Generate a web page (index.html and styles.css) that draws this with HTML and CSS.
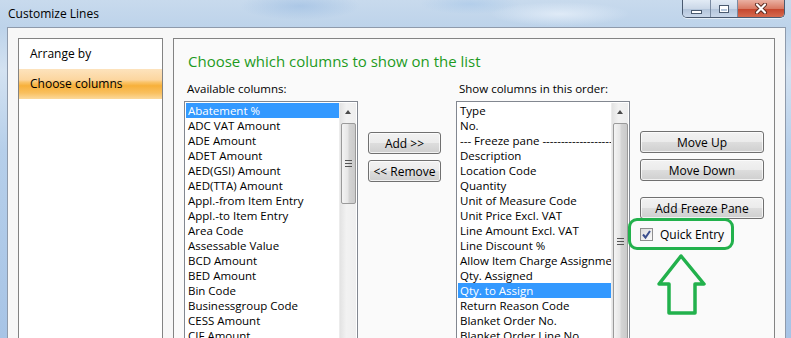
FILE: index.html
```html
<!DOCTYPE html>
<html lang="en">
<head>
  <meta charset="UTF-8">
  <title>Customize Lines</title>
  <link rel="stylesheet" href="styles.css">
</head>
<body>
  <div class="window">
    <div class="titlebar">
      <span class="title">Customize Lines</span>
      <div class="caption-buttons">
        <span class="cap-btn cap-min"><span class="min-glyph"></span></span>
        <span class="cap-btn cap-max"><span class="max-glyph"></span></span>
        <span class="cap-btn cap-close">
          <svg width="14" height="11" viewBox="0 0 14 11">
            <path d="M3 1.5 L11 9.5 M11 1.5 L3 9.5" stroke="#5a2a20" stroke-width="4" stroke-linecap="round"/>
            <path d="M3 1.5 L11 9.5 M11 1.5 L3 9.5" stroke="#fff" stroke-width="2.2" stroke-linecap="round"/>
          </svg>
        </span>
      </div>
    </div>

    <div class="client">
      <ul class="nav">
        <li class="nav-item">Arrange by</li>
        <li class="nav-item active">Choose columns</li>
      </ul>

      <div class="content">
        <h2 class="heading">Choose which columns to show on the list</h2>
        <div class="columns">
          <div class="list-col">
            <div class="list-label">Available columns:</div>
            <div class="listbox">
              <ul class="items">
                <li class="selected">Abatement %</li>
                <li>ADC VAT Amount</li>
                <li>ADE Amount</li>
                <li>ADET Amount</li>
                <li>AED(GSI) Amount</li>
                <li>AED(TTA) Amount</li>
                <li>Appl.-from Item Entry</li>
                <li>Appl.-to Item Entry</li>
                <li>Area Code</li>
                <li>Assessable Value</li>
                <li>BCD Amount</li>
                <li>BED Amount</li>
                <li>Bin Code</li>
                <li>Businessgroup Code</li>
                <li>CESS Amount</li>
                <li>CIF Amount</li>
              </ul>
              <div class="scrollbar">
                <div class="scroll-up"></div>
                <div class="thumb thumb-short"><span class="grip"></span></div>
              </div>
            </div>
          </div>

          <div class="mid-buttons">
            <button class="btn">Add &gt;&gt;</button>
            <button class="btn">&lt;&lt; Remove</button>
          </div>

          <div class="list-col second">
            <div class="list-label">Show columns in this order:</div>
            <div class="listbox">
              <ul class="items">
                <li>Type</li>
                <li>No.</li>
                <li>--- Freeze pane ------------------------------------</li>
                <li>Description</li>
                <li>Location Code</li>
                <li>Quantity</li>
                <li>Unit of Measure Code</li>
                <li>Unit Price Excl. VAT</li>
                <li>Line Amount Excl. VAT</li>
                <li>Line Discount %</li>
                <li>Allow Item Charge Assignment</li>
                <li>Qty. Assigned</li>
                <li class="selected">Qty. to Assign</li>
                <li>Return Reason Code</li>
                <li>Blanket Order No.</li>
                <li>Blanket Order Line No.</li>
              </ul>
              <div class="scrollbar">
                <div class="scroll-up"></div>
                <div class="thumb thumb-long"><span class="grip"></span></div>
              </div>
            </div>
          </div>

          <div class="side-buttons">
            <button class="btn">Move Up</button>
            <button class="btn">Move Down</button>
            <button class="btn freeze">Add Freeze Pane</button>
            <div class="check-row">
              <span class="checkbox">
                <svg width="11" height="11" viewBox="0 0 11 11">
                  <path d="M2 5.5 L4.5 8.5 L9 2" fill="none" stroke="#3b4f8e" stroke-width="2"/>
                </svg>
              </span>
              <span>Quick Entry</span>
              <span class="highlight-ring"></span>
              <svg class="up-arrow" width="54" height="66" viewBox="0 0 54 66">
                <polygon points="26,4 49,32 40,32 40,61 14,61 14,32 4,32" fill="none" stroke="#22b14c" stroke-width="3.5" stroke-linejoin="round"/>
              </svg>
            </div>
          </div>
        </div>
      </div>
    </div>
  </div>
</body>
</html>
```

FILE: styles.css
```css
* {
  box-sizing: border-box;
}
body {
  margin: 0;
  width: 791px;
  height: 338px;
  overflow: hidden;
  font-family: "Open Sans", "Noto Sans", sans-serif;
  font-size: 11.5px;
  color: #000;
  background: linear-gradient(180deg, #c8daed 0, #bdd3ea 27px, #d3e2f1 70px, #b6cfea 150px, #a7c4e6 338px);
}
.window {
  height: 338px;
  display: flex;
  flex-direction: column;
}
.titlebar {
  height: 27px;
  display: flex;
  align-items: flex-start;
  padding-left: 8px;
  background:
    radial-gradient(ellipse 60px 14px at 300px 6px, rgba(150, 185, 225, 0.55), transparent),
    radial-gradient(ellipse 70px 12px at 560px 14px, rgba(235, 243, 252, 0.7), transparent),
    radial-gradient(ellipse 50px 10px at 470px 4px, rgba(160, 195, 232, 0.5), transparent);
}
.title {
  line-height: 27px;
  font-size: 12px;
}
.caption-buttons {
  margin-left: auto;
  margin-right: 6px;
  height: 18px;
  display: flex;
  border: 1px solid #4a5a70;
  border-top: none;
  border-radius: 0 0 5px 5px;
  overflow: hidden;
  box-shadow: 0 1px 0 rgba(255, 255, 255, 0.6);
}
.cap-btn {
  display: flex;
  align-items: center;
  justify-content: center;
  height: 17px;
}
.cap-min,
.cap-max {
  width: 28px;
  background: linear-gradient(#e2ebf5, #cbd8e8 50%, #b1c3d9 51%, #cad8ea);
  border-right: 1px solid #7a8ba2;
}
.cap-max {
  width: 27px;
}
.cap-close {
  width: 46px;
  background: linear-gradient(#eab0a2, #d97a64 50%, #c4442c 51%, #d66a4e);
}
.min-glyph {
  width: 11px;
  height: 4px;
  margin-top: 7px;
  background: #fff;
  border: 1px solid #4b5b70;
}
.max-glyph {
  width: 10px;
  height: 8px;
  border: 1px solid #4b5b70;
  box-shadow: inset 0 0 0 1px #fff, inset 0 2px 0 1px #fff;
  background: transparent;
}
.client {
  flex: 1;
  margin: 0 5px 0 7px;
  border: 1px solid #8e9aab;
  border-bottom: none;
  background: #f7f7f7;
  display: flex;
  gap: 10px;
  padding: 10px 10px 0 10px;
}
.nav {
  width: 145px;
  margin: 0;
  padding: 0;
  list-style: none;
  background: #fff;
  border: 1px solid #838383;
  border-bottom: none;
}
.nav-item {
  height: 30px;
  line-height: 30px;
  padding-left: 11px;
  font-size: 12px;
}
.nav-item.active {
  background: linear-gradient(#fde3bd 0%, #fcd69f 36%, #fac46a 44%, #f7b03a 56%, #f9c060 80%, #fcd99c 100%);
}
.content {
  flex: 1;
  background: #fafafa;
  border: 1px solid #838383;
  border-bottom: none;
  padding: 11px 10px 0 10px;
}
.heading {
  margin: 0 0 9px 4px;
  font-size: 15px;
  line-height: 22px;
  font-weight: normal;
  color: #1e9a1e;
}
.columns {
  display: flex;
  align-items: flex-start;
}
.list-col {
  width: 174px;
}
.list-col.second {
  margin-left: 15px;
}
.list-label {
  line-height: 15px;
  padding-left: 3px;
  margin-bottom: 5px;
}
.listbox {
  height: 260px;
  display: flex;
  background: #fff;
  border: 1px solid #828790;
  border-bottom: none;
  padding: 1px 1px 0 1px;
}
.items {
  flex: 1;
  min-width: 0;
  margin: 0;
  padding: 0;
  list-style: none;
  overflow: hidden;
}
.items li {
  height: 15px;
  line-height: 15px;
  padding-left: 2px;
  white-space: nowrap;
  overflow: hidden;
}
.items li.selected {
  background: #3399ff;
  color: #fff;
}
.scrollbar {
  width: 17px;
  background: linear-gradient(90deg, #e3e3e3, #f2f2f2 40%, #eeeeee);
  border-left: 1px solid #ececec;
  display: flex;
  flex-direction: column;
  align-items: center;
}
.scroll-up {
  width: 17px;
  height: 17px;
  position: relative;
}
.scroll-up::after {
  content: "";
  position: absolute;
  left: 5px;
  top: 7px;
  border-left: 3.5px solid transparent;
  border-right: 3.5px solid transparent;
  border-bottom: 4px solid #4a4a4a;
}
.thumb {
  width: 15px;
  margin-top: 3px;
  border: 1px solid #9a9a9a;
  border-radius: 2px;
  background: linear-gradient(90deg, #f4f4f4, #e6e6e6 45%, #d4d4d4 55%, #cacaca);
  display: flex;
  align-items: center;
  justify-content: center;
}
.thumb-short {
  height: 81px;
}
.thumb-long {
  height: 236px;
}
.grip {
  width: 7px;
  height: 7px;
  background: linear-gradient(#555 0 1px, transparent 1px 3px, #555 3px 4px, transparent 4px 6px, #555 6px 7px);
}
.mid-buttons,
.side-buttons {
  display: flex;
  flex-direction: column;
  gap: 6px;
}
.mid-buttons {
  width: 73px;
  margin-left: 10px;
  padding-top: 51px;
}
.side-buttons {
  width: 124px;
  margin-left: 10px;
  padding-top: 50px;
}
.btn {
  height: 22px;
  padding: 0;
  font-family: inherit;
  font-size: 12px;
  color: #000;
  border: 1px solid #707070;
  border-radius: 3px;
  background: linear-gradient(#f2f2f2 0%, #ebebeb 50%, #dddddd 51%, #cfcfcf 100%);
  box-shadow: inset 0 0 0 1px rgba(255, 255, 255, 0.7);
}
.btn.freeze {
  margin-top: 10px;
}
.check-row {
  position: relative;
  display: flex;
  align-items: center;
  gap: 7px;
  margin-top: 2px;
  height: 15px;
  font-size: 12px;
}
.checkbox {
  width: 13px;
  height: 13px;
  border: 1px solid #8f8f8f;
  background: linear-gradient(135deg, #dcdcdc, #fbfbfb);
  display: flex;
  align-items: center;
  justify-content: center;
}
.highlight-ring {
  position: absolute;
  left: -12px;
  top: -9px;
  width: 106px;
  height: 32px;
  border: 3px solid #22b14c;
  border-radius: 9px;
}
.up-arrow {
  position: absolute;
  left: 15px;
  top: 25px;
}
```
